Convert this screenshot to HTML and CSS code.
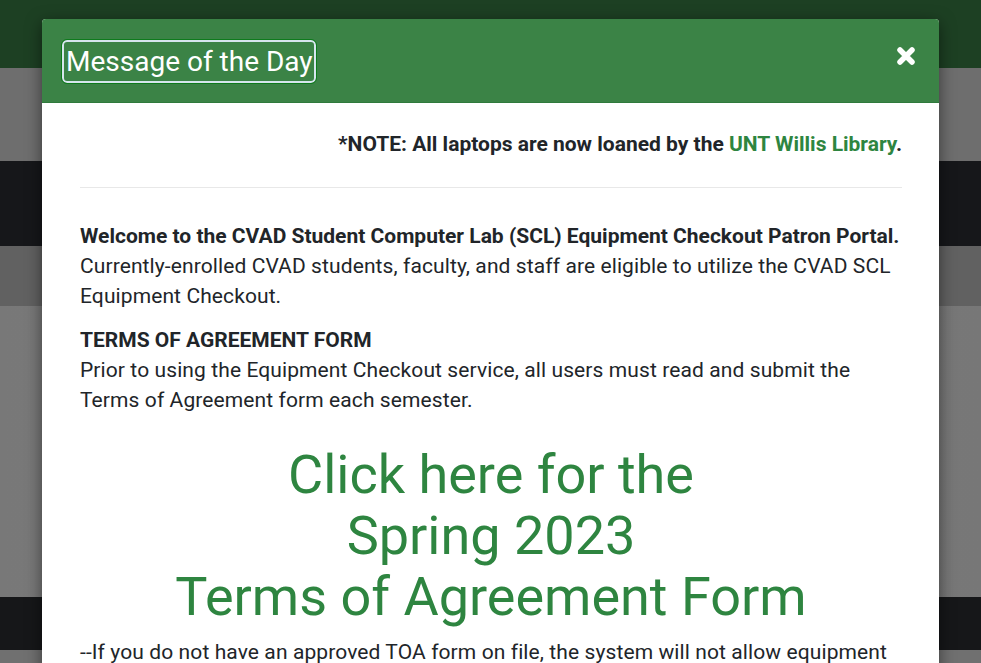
FILE: index.html
```html
<!DOCTYPE html>
<html>
<head>
<meta charset="utf-8">
<link rel="stylesheet" href="styles.css">
</head>
<body>
<div class="page">
  <div class="band band-green"></div>
  <div class="band band-gray1"></div>
  <div class="band band-dark1"></div>
  <div class="band band-gray2"></div>
  <div class="band band-gray3"></div>
  <div class="band band-dark2"></div>
  <div class="band band-gray4"></div>
</div>
<div class="modal">
  <div class="modal-header">
    <h4 class="modal-title">Message of the Day</h4>
    <button class="close" aria-label="Close">
      <svg width="20" height="20" viewBox="0 0 20 20"><path d="M4 4 L16 16 M16 4 L4 16" stroke="#fff" stroke-width="5.5" stroke-linecap="round"/></svg>
    </button>
  </div>
  <div class="modal-body">
    <p class="note"><strong>*NOTE: All laptops are now loaned by the <a href="#">UNT Willis Library</a>.</strong></p>
    <hr>
    <p><strong>Welcome to the CVAD Student Computer Lab (SCL) Equipment Checkout Patron Portal.</strong><br>Currently-enrolled CVAD students, faculty, and staff are eligible to utilize the CVAD SCL Equipment Checkout.</p>
    <p><strong>TERMS OF AGREEMENT FORM</strong><br>Prior to using the Equipment Checkout service, all users must read and submit the Terms of Agreement form each semester.</p>
    <p class="big"><a href="#">Click here for the<br>Spring 2023<br>Terms of Agreement Form</a></p>
    <p class="warn">--If you do not have an approved TOA form on file, the system will not allow equipment checkout.</p>
  </div>
</div>
</body>
</html>
```

FILE: styles.css
```css
html, body {
  margin: 0;
  padding: 0;
  height: 100%;
  overflow: hidden;
}
body {
  font-family: Roboto, "Liberation Sans", sans-serif;
  color: #212529;
  background: #707070;
}
.page {
  display: flex;
  flex-direction: column;
}
.band-green { height: 68px; background: #1d4023; }
.band-gray1 { height: 93px; background: #6e6e6e; }
.band-dark1 { height: 85px; background: #16171a; }
.band-gray2 { height: 60px; background: #616161; }
.band-gray3 { height: 291px; background: linear-gradient(90deg, #787878, #7b7b7b 50%, #777); }
.band-dark2 { height: 53px; background: #161719; }
.band-gray4 { height: 20px; background: #707070; }

.modal {
  position: absolute;
  left: 42px;
  top: 19px;
  width: 897px;
  height: 700px;
  background: #fff;
  border-radius: 4px;
  overflow: hidden;
  box-shadow: 0 4px 16px rgba(0,0,0,0.5);
}
.modal-header {
  height: 84px;
  background: #3b8346;
  border-bottom: 1px solid #2f7a3c;
  box-sizing: border-box;
  display: flex;
  align-items: center;
  justify-content: space-between;
  padding: 0 22px 0 20px;
}
.modal-title {
  margin: 0;
  font-weight: 400;
  font-size: 28px;
  color: #fff;
  line-height: 39px;
  padding: 0 1px 0 2px;
  border: 2px solid #d6e6ee;
  border-radius: 5px;
  outline: 1px solid #0e7a1c;
  margin-top: 2px;
}
.close {
  background: none;
  border: 0;
  padding: 0;
  width: 22px;
  height: 22px;
  display: flex;
  align-items: center;
  justify-content: center;
  margin-top: -10px;
}
.modal-body {
  padding: 26px 37px 0 38px;
  font-size: 21px;
  line-height: 30px;
  letter-spacing: 0.1px;
}
.modal-body strong {
  letter-spacing: 0;
}
.modal-body p {
  margin: 0 0 14px;
}
.note {
  text-align: right;
}
a {
  color: #2e8540;
  text-decoration: none;
}
hr {
  border: 0;
  border-top: 1px solid #e8e8e8;
  margin: 28px 0 33px;
}
.modal-body p.big {
  text-align: center;
  font-size: 54px;
  line-height: 61px;
  letter-spacing: 0;
  margin: 29px 0 10px;
}
```
